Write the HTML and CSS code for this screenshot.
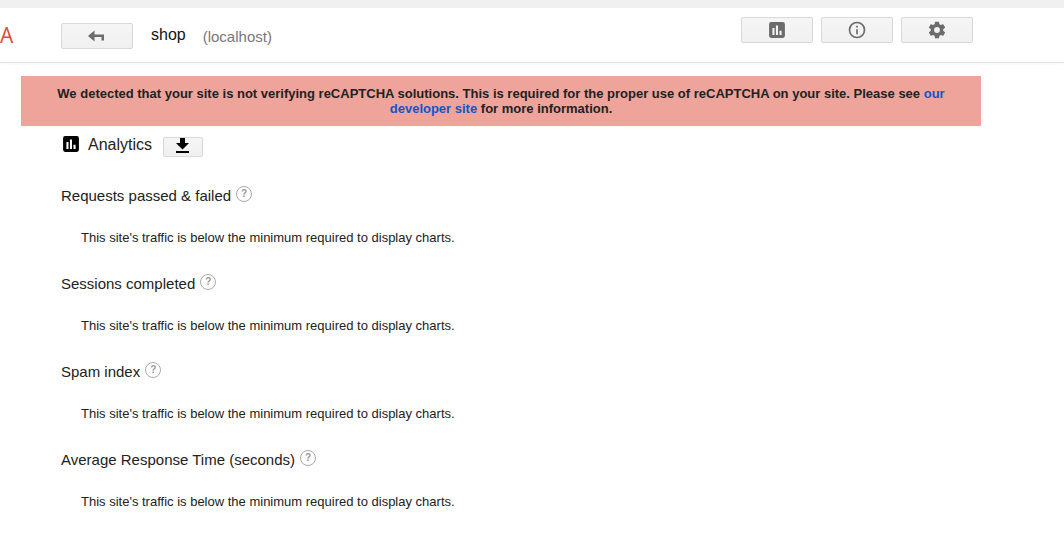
FILE: index.html
```html
<!DOCTYPE html>
<html lang="en">
<head>
<meta charset="utf-8">
<title>shop - Analytics</title>
<link rel="stylesheet" href="styles.css">
</head>
<body>
<div class="topbar"></div>
<header class="header">
  <span class="logo">A</span>
  <button class="btn back" aria-label="Back">
    <svg width="18" height="12" viewBox="0 0 18 12"><path d="M0 6l6.500-5.500v4H16v6h-2.500V7h-7v4.500z"/></svg>
  </button>
  <h1 class="site">shop</h1>
  <span class="domain">(localhost)</span>
  <nav class="actions">
    <button class="btn" aria-label="Analytics"><svg width="20" height="20" viewBox="0 0 24 24"><path d="M19 2.500H5A2.500 2.500 0 0 0 2.500 5v14A2.500 2.500 0 0 0 5 21.500h14a2.500 2.500 0 0 0 2.500-2.500V5A2.500 2.500 0 0 0 19 2.500zM9 18H6.500V9.500H9zm4.200 0h-2.500V6.500h2.500zm4.300 0H15v-5h2.500z"/></svg></button>
    <button class="btn" aria-label="Information"><svg width="20" height="20" viewBox="0 0 24 24"><path d="M11 17h2v-6h-2zm1-15a10 10 0 1 0 0 20 10 10 0 0 0 0-20zm0 18a8 8 0 1 1 0-16 8 8 0 0 1 0 16zM11 9h2V7h-2z"/></svg></button>
    <button class="btn" aria-label="Settings"><svg width="20" height="20" viewBox="0 0 24 24"><path d="M19.430 12.980c.04-.32.07-.64.07-.98s-.03-.66-.07-.98l2.110-1.650c.19-.15.24-.42.12-.64l-2-3.460c-.12-.22-.39-.3-.61-.22l-2.490 1c-.52-.4-1.080-.73-1.690-.98l-.38-2.650C14.460 2.180 14.250 2 14 2h-4c-.25 0-.46.18-.49.42l-.38 2.650c-.61.25-1.170.59-1.690.98l-2.490-1c-.23-.09-.49 0-.61.22l-2 3.460c-.13.22-.07.49.12.64l2.110 1.650c-.04.32-.07.65-.07.98s.03.66.07.98l-2.110 1.650c-.19.15-.24.42-.12.64l2 3.460c.12.22.39.3.61.22l2.490-1c.52.4 1.080.73 1.690.98l.38 2.650c.03.24.24.42.49.42h4c.25 0 .46-.18.49-.42l.38-2.650c.61-.25 1.170-.59 1.690-.98l2.490 1c.23.09.49 0 .61-.22l2-3.460c.12-.22.07-.49-.12-.64zM12 15.500a3.500 3.500 0 1 1 0-7 3.500 3.500 0 0 1 0 7z"/></svg></button>
  </nav>
</header>
<main class="main">
  <p class="alert">We detected that your site is not verifying reCAPTCHA solutions. This is required for the proper use of reCAPTCHA on your site. Please see <a href="#">our developer site</a> for more information.</p>
  <div class="title">
    <svg width="20" height="20" viewBox="0 0 24 24"><path d="M19 2.500H5A2.500 2.500 0 0 0 2.500 5v14A2.500 2.500 0 0 0 5 21.500h14a2.500 2.500 0 0 0 2.500-2.500V5A2.500 2.500 0 0 0 19 2.500zM9 18H6.500V9.500H9zm4.200 0h-2.500V6.500h2.500zm4.300 0H15v-5h2.500z"/></svg>
    <h2>Analytics</h2>
    <button class="btn download" aria-label="Download"><svg width="14" height="16" viewBox="0 0 14 16"><path d="M4 0h5v5h4L6.500 11.500 0 5h4zM0 13h13v2H0z"/></svg></button>
  </div>
  <section class="chart">
    <h3>Requests passed &amp; failed <button class="help">?</button></h3>
    <p>This site's traffic is below the minimum required to display charts.</p>
  </section>
  <section class="chart">
    <h3>Sessions completed <button class="help">?</button></h3>
    <p>This site's traffic is below the minimum required to display charts.</p>
  </section>
  <section class="chart">
    <h3>Spam index <button class="help">?</button></h3>
    <p>This site's traffic is below the minimum required to display charts.</p>
  </section>
  <section class="chart">
    <h3>Average Response Time (seconds) <button class="help">?</button></h3>
    <p>This site's traffic is below the minimum required to display charts.</p>
  </section>
</main>
</body>
</html>
```
FILE: styles.css
```css
* { box-sizing: border-box; }
body {
  margin: 0;
  background: #fff;
  color: #222;
  font-family: "Liberation Sans", Arial, sans-serif;
  font-size: 13px;
}
h1, h2, h3, p { margin: 0; font-weight: normal; }
.topbar { height: 8px; background: #f0f0f0; }
.header {
  display: flex;
  align-items: center;
  height: 55px;
  padding-right: 91px;
  border-bottom: 1px solid #e5e5e5;
  box-shadow: 0 1px 2px #f5f5f5;
}
.logo {
  width: 61px;
  color: #dd4b39;
  font-family: "Open Sans", sans-serif;
  font-size: 21px;
}
.btn {
  display: flex;
  align-items: center;
  justify-content: center;
  width: 72px;
  height: 26px;
  padding: 0;
  border: 1px solid #d9d9d9;
  border-radius: 2px;
  background: linear-gradient(#f5f5f5, #f0f0f0);
  fill: #6b6b6b;
}
.back { margin-top: 2px; }
.site { margin: 0 17px 0 18px; color: #111; font-size: 16px; }
.domain { padding-top: 2px; color: #777; font-size: 15px; }
.actions { display: flex; gap: 8px; margin: 0 0 10px auto; }
.main { padding: 13px 83px 0 21px; }
.alert {
  padding: 10px 32px;
  background: #efa49b;
  font-weight: bold;
  line-height: 15px;
  text-align: center;
}
.alert a { color: #15c; text-decoration: none; }
.title {
  display: flex;
  align-items: center;
  height: 36px;
  padding-left: 40px;
}
.title h2 { margin: 0 11px 0 7px; padding-top: 2px; font-size: 16px; }
.download {
  align-items: flex-start;
  width: 40px;
  height: 20px;
  margin-top: 5px;
  fill: #000;
}
.chart { height: 88px; padding: 23px 0 0 40px; }
.chart h3 {
  display: flex;
  align-items: center;
  gap: 5px;
  height: 20px;
  font-size: 15px;
}
.chart p { padding: 25px 0 0 20px; line-height: 15px; }
.help {
  width: 16px;
  height: 16px;
  margin-bottom: 3px;
  padding: 0;
  border: 1px solid #aaa;
  border-radius: 50%;
  background: #fff;
  color: #999;
  font: bold 10px/14px "Liberation Sans", Arial, sans-serif;
}
```
